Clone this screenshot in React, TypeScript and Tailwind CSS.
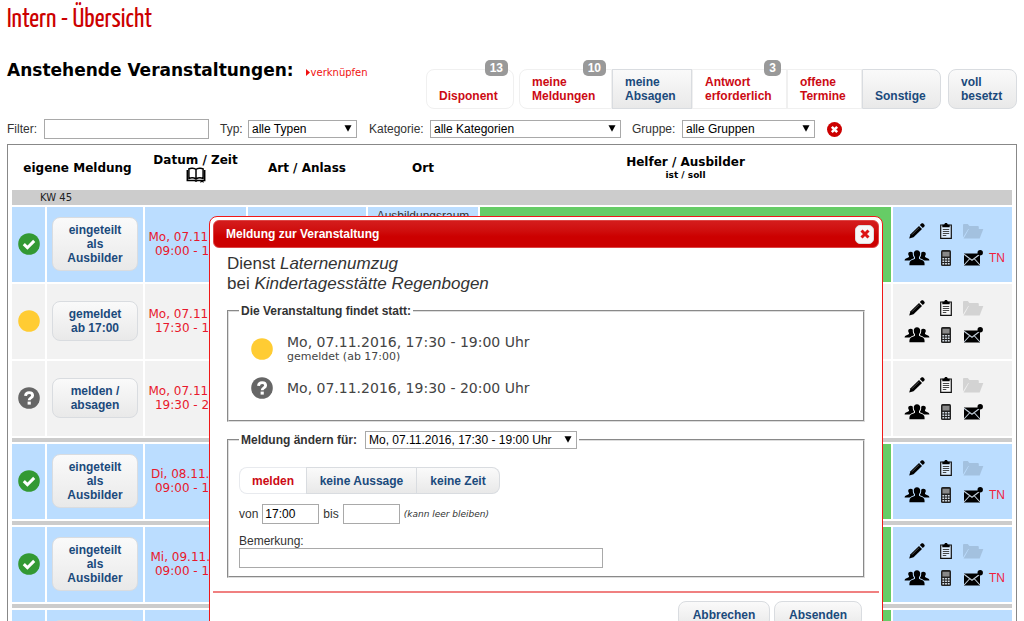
import { useState, type ReactNode } from 'react';
import clsx from 'clsx';

type Status = 'ok' | 'pending' | 'open';

interface EventRow {
  status: Status;
  label: string[];
  date: string;
  time: string;
  place?: string;
  staffed: boolean;
  divider?: boolean;
}

const EVENTS: EventRow[] = [
  { status: 'ok', label: ['eingeteilt', 'als', 'Ausbilder'], date: 'Mo, 07.11.2016', time: '09:00 - 17:00', place: 'Ausbildungsraum', staffed: true },
  { status: 'pending', label: ['gemeldet', 'ab 17:00'], date: 'Mo, 07.11.2016', time: '17:30 - 19:00', staffed: false },
  { status: 'open', label: ['melden /', 'absagen'], date: 'Mo, 07.11.2016', time: '19:30 - 20:00', staffed: false, divider: true },
  { status: 'ok', label: ['eingeteilt', 'als', 'Ausbilder'], date: 'Di, 08.11.2016', time: '09:00 - 17:00', staffed: true, divider: true },
  { status: 'ok', label: ['eingeteilt', 'als', 'Ausbilder'], date: 'Mi, 09.11.2016', time: '09:00 - 17:00', staffed: true, divider: true },
  { status: 'ok', label: ['eingeteilt', 'als', 'Ausbilder'], date: 'Do, 10.11.2016', time: '09:00 - 17:00', staffed: true },
];

const TABS = [
  { lines: ['meine', 'Meldungen'], badge: 10, active: true },
  { lines: ['meine', 'Absagen'], active: false },
  { lines: ['Antwort', 'erforderlich'], badge: 3, active: true },
  { lines: ['offene', 'Termine'], active: true },
  { lines: ['Sonstige'], active: false },
];

const TAB_WIDTHS = ['w-[93px] rounded-l-lg', 'w-[80px]', 'w-[95px]', 'w-[75px]', 'w-[79px] rounded-r-lg'];

const VERDANA = "font-['DejaVu_Sans',sans-serif]";
const ARIAL = "font-['Liberation_Sans',Arial,sans-serif]";
const BUTTON = 'border border-[#d9dce0] bg-linear-to-b from-[#fafafa] to-[#e9e9e9] font-bold text-[#1b4a7c]';

function StatusIcon({ status }: { status: Status }) {
  const fill = { ok: '#339933', pending: '#ffcc33', open: '#666666' }[status];
  return (
    <svg viewBox="0 0 22 22" className="mx-auto block h-[22px] w-[22px]" aria-hidden="true">
      <circle cx="11" cy="11" r="10.8" fill={fill} />
      {status === 'ok' && <path d="M5.8 11.2l3.6 3.5 6.8-6.8" fill="none" stroke="#fff" strokeWidth="3" />}
      {status === 'open' && (
        <>
          <path d="M7.5 8.9C7.7 6.7 9 5.6 11.1 5.6c2.1 0 3.5 1.1 3.5 2.9 0 2.5-3.4 2.3-3.4 4.7" fill="none" stroke="#fff" strokeWidth="2.9" />
          <path d="M9.6 14.6h3.2v3H9.6z" fill="#fff" />
        </>
      )}
    </svg>
  );
}

function CloseCircle() {
  return (
    <svg viewBox="0 0 14 14" className="block h-[15px] w-[15px]" aria-hidden="true">
      <circle cx="7" cy="7" r="7" fill="#cc0000" />
      <path d="M4.5 4.5l5 5m0-5l-5 5" stroke="#fff" strokeWidth="2.4" />
    </svg>
  );
}

function BookIcon() {
  return (
    <svg viewBox="0 0 20 16" className="mx-auto block h-4 w-5" fill="none" stroke="#000" strokeWidth="1.5" aria-hidden="true">
      <path d="M10 2.6C8.5.9 4.8.8 2.9 1.8v9.7c2.4-.9 5.1-.8 7.1.6 2-1.4 4.700-1.500 7.100-.6V1.8c-1.900-1-5.600-.9-7.100.8zM10 2.600v9.600" />
      <path d="M1.300 3v10.500h7.500l1.200.6 1.200-.6h7.500V3" />
      <path d="M14.500 13h3v3l-1.500-1.200-1.500 1.200z" fill="#000" stroke="none" />
    </svg>
  );
}

function PencilIcon() {
  return (
    <svg viewBox="0 0 18 18" className="h-[18px] w-[18px]" aria-hidden="true">
      <path d="M1.200 16.600l1.300-4.300L11 3.900l3 3-8.500 8.400z" />
      <path d="M11.800 3.100l1.600-1.500c.6-.6 1.300-.6 1.900 0l1.100 1.100c.5.6.5 1.200 0 1.800l-1.600 1.600z" />
      <path d="M4 12.700l7-7" stroke="#888" strokeWidth=".6" />
    </svg>
  );
}

function ClipboardIcon() {
  return (
    <svg viewBox="0 0 14 18" className="h-[18px] w-[14px]" aria-hidden="true">
      <path d="M1.700 3h10.600v13.300H1.700z" fill="#fff" fillOpacity=".5" stroke="#111" strokeWidth="1.200" />
      <path d="M3.300 5.200V2.800h1.900C5.300 1.500 6 1 7 1s1.700.5 1.800 1.800h1.900v2.400z" />
      <path d="M3.800 7.500h6.400M3.800 9.500h6.400M3.800 11.500h6.400M3.800 13.500h3.500" stroke="#333" strokeWidth=".9" />
    </svg>
  );
}

function FolderIcon() {
  return (
    <svg viewBox="0 0 22 18" className="h-[18px] w-[22px] opacity-[0.12]" aria-hidden="true">
      <path d="M1 15.500V3.200C1 2.300 1.400 2 2.200 2h3.600l1.600 1.900h8.200c.8 0 1.200.4 1.200 1.200v2H6.300z" />
      <path d="M6.900 7.100h14.400l-3.600 9.300H1.600z" />
    </svg>
  );
}

function UsersIcon() {
  return (
    <svg viewBox="0 0 26 18" className="h-[18px] w-[26px]" aria-hidden="true">
      <path d="M13 1.200c2 0 3.200 1.300 3.200 3.300 0 1.700-.5 2.800-1.200 3.600v1.700c1.800 1 4.500 1.600 5.200 3.100.4.8.4 2.300.4 3.400H5.400c0-1.100 0-2.600.4-3.400.7-1.500 3.400-2.100 5.200-3.100V8.100c-.7-.8-1.200-1.900-1.200-3.600 0-2 1.200-3.300 3.200-3.300z" />
      <path d="M6.700 2.800c1 0 1.700.3 2.100.9-.2 2 .3 3.700 1.200 4.900v.6c-1.500.8-3.300 1.300-4.400 2.400H.6c0-1.700.7-1.900 2.600-2.700l1.800-.8v-1.200C4.500 6.300 4.200 5.600 4.200 4.900c0-1.300 1-2.100 2.500-2.100z" />
      <path d="M19.300 2.800c-1 0-1.700.3-2.100.9.2 2-.3 3.700-1.200 4.900v.6c1.500.8 3.300 1.300 4.400 2.400h5c0-1.700-.7-1.900-2.600-2.700l-1.800-.8v-1.200c.5-.6.8-1.300.8-2 0-1.300-1-2.100-2.500-2.100z" />
    </svg>
  );
}

function PhoneIcon() {
  return (
    <svg viewBox="0 0 12 18" className="h-[18px] w-3" aria-hidden="true">
      <rect x="1" y="1" width="10" height="16" rx="1.5" fill="#222" />
      <path d="M2.500 2.800h7v4.700h-7z" fill="#888" />
      <path d="M2.400 9h1.800v1.500H2.400zM5.100 9h1.800v1.500H5.100zM7.800 9h1.800v1.500H7.800zM2.400 11.500h1.800V13H2.400zM5.100 11.500h1.800V13H5.100zM7.800 11.500h1.800V13H7.800zM2.400 14h1.800v1.500H2.400zM5.100 14h1.800v1.500H5.100zM7.800 14h1.800v1.500H7.800z" fill="#d4dde6" />
    </svg>
  );
}

function MailIcon() {
  return (
    <svg viewBox="0 0 22 18" className="h-[18px] w-[22px]" aria-hidden="true">
      <path d="M2 4.500h16v12H2z" />
      <path d="M2 5.200l8 6 7.500-5.700M2 16l5.500-6M18 16l-5.500-6" fill="none" stroke="#c4d0dc" strokeWidth="1.1" />
      <circle cx="18.2" cy="3.7" r="2.7" />
    </svg>
  );
}

function IconButton({ label, children }: { label: string; children: ReactNode }) {
  return (
    <button type="button" aria-label={label} className="flex h-[18px] items-center justify-center">
      {children}
    </button>
  );
}

function Select({ id, value, className }: { id: string; value: string; className: string }) {
  return (
    <span className={clsx('relative inline-block h-[18px]', className)}>
      <select id={id} className="block h-full w-full appearance-none border border-[#a9a9a9] bg-white pl-[3px] text-xs leading-4 text-black">
        <option>{value}</option>
      </select>
      <svg viewBox="0 0 8 7" className="pointer-events-none absolute top-[5px] right-[5px] h-[7px] w-2" aria-hidden="true">
        <path d="M.5.3h7L4 6.700z" />
      </svg>
    </span>
  );
}

function Badge({ count }: { count: number }) {
  return (
    <span className="absolute -top-[10px] right-[5px] flex h-4 items-center rounded-[5px] bg-[#999] px-[5px] text-xs leading-4 text-white">
      {count}
    </span>
  );
}

function Tab({ lines, badge, active, className }: { lines: string[]; badge?: number; active: boolean; className: string }) {
  return (
    <button
      type="button"
      className={clsx(
        'relative flex h-10 flex-col items-start justify-end border py-[5px] pl-3 text-left text-xs leading-[14px] font-bold',
        active ? 'border-[#f0f0f0] bg-white text-[#cc0a14]' : 'border-[#d9dce0] bg-linear-to-b from-[#fafafa] to-[#e9e9e9] text-[#1b4a7c]',
        className,
      )}
    >
      {lines.map((line) => (
        <span key={line}>{line}</span>
      ))}
      {badge && <Badge count={badge} />}
    </button>
  );
}

function EventTable() {
  return (
    <table className={clsx('mt-[5px] w-full table-fixed border-separate border-spacing-[2px] border border-[#888] p-[2px] text-xs', VERDANA)}>
      <colgroup>
        <col className="w-[33px]" />
        <col className="w-[96px]" />
        <col className="w-[101px]" />
        <col className="w-[118px]" />
        <col className="w-[110px]" />
        <col />
        <col className="w-[119px]" />
      </colgroup>
      <thead>
        <tr className="h-[39px] leading-[14px] text-black">
          <th colSpan={2} className="pb-[2px]">eigene Meldung</th>
          <th className="pb-[2px] whitespace-nowrap">
            Datum / Zeit
            <BookIcon />
          </th>
          <th className="pb-[2px]">Art / Anlass</th>
          <th className="pb-[2px]">Ort</th>
          <th className="pb-[2px]">
            Helfer / Ausbilder
            <span className="block text-[9px] leading-3">ist / soll</span>
          </th>
          <th />
        </tr>
      </thead>
      <tbody>
        <tr>
          <td colSpan={7} className="h-[15px] bg-[#ccc] pl-7 text-[10px] leading-[15px] text-[#222]">
            KW 45
          </td>
        </tr>
        {EVENTS.map((event) => (
          <EventRows key={event.date + event.time} event={event} />
        ))}
      </tbody>
    </table>
  );
}

function EventRows({ event }: { event: EventRow }) {
  const cell = event.staffed ? 'bg-[#bbddff]' : 'bg-[#f2f2f2]';
  return (
    <>
      <tr className="h-[75px] leading-[14px]">
        <td className={clsx(cell, 'pb-[2px]')}>
          <StatusIcon status={event.status} />
        </td>
        <td className={clsx(cell, 'px-[5px] pb-[2px]')}>
          <button type="button" className={clsx(BUTTON, ARIAL, 'block w-full rounded-lg py-[5px]')}>
            {event.label.map((line) => (
              <span key={line} className="block">
                {line}
              </span>
            ))}
          </button>
        </td>
        <td className={clsx(cell, 'pb-[2px] text-center whitespace-nowrap text-[#e8182c]')}>
          {event.date}
          <br />
          {event.time}
        </td>
        <td className={cell} />
        <td className={clsx(cell, ARIAL, 'pt-[2px] text-center align-top text-[#333]')}>{event.place}</td>
        <td className={event.staffed ? 'bg-[#66cc66]' : cell} />
        <td className={clsx(cell, 'pl-[11px]')}>
          <div className="grid grid-cols-[26px_22px_22px_20px] gap-x-[5px] gap-y-[9px]">
            <IconButton label="Bearbeiten"><PencilIcon /></IconButton>
            <IconButton label="Protokoll"><ClipboardIcon /></IconButton>
            <IconButton label="Dateien"><FolderIcon /></IconButton>
            <span />
            <IconButton label="Teilnehmer"><UsersIcon /></IconButton>
            <IconButton label="Telefonliste"><PhoneIcon /></IconButton>
            <IconButton label="Nachricht"><MailIcon /></IconButton>
            {event.staffed && <a href="#tn" className={clsx(ARIAL, 'leading-[18px] text-[#f0203c]')}>TN</a>}
          </div>
        </td>
      </tr>
      {event.divider && (
        <tr>
          <td colSpan={7} className="h-1 bg-[#ccc]" />
        </tr>
      )}
    </>
  );
}

function ReportDialog() {
  const [from, setFrom] = useState('17:00');
  const [until, setUntil] = useState('');
  const [note, setNote] = useState('');

  return (
    <div role="dialog" aria-labelledby="dialog-title" className="absolute top-[216px] left-[209px] w-[674px] rounded-lg border border-[#f01818] bg-white p-[3px] text-xs text-[#333]">
      <div className="flex h-7 items-center justify-between rounded-md border border-[#d44] bg-linear-to-b from-[#d41c1c] to-[#cc0000] to-60% pr-1 pl-3">
        <h2 id="dialog-title" className="font-bold text-white">Meldung zur Veranstaltung</h2>
        <button type="button" aria-label="Schließen" className="flex h-[19px] w-[19px] items-center justify-center rounded-[5px] border border-[#ddd] bg-[#f8f8f8]">
          <svg viewBox="0 0 10 10" className="h-[10px] w-[10px]" aria-hidden="true">
            <path d="M1.500 1.500l7 7m0-7l-7 7" stroke="#dd1515" strokeWidth="3" />
          </svg>
        </button>
      </div>

      <div className="px-[14px] pt-[6px] pb-[13px]">
        <p className="text-[17px] leading-5">
          Dienst <em>Laternenumzug</em>
          <br />
          bei <em>Kindertagesstätte Regenbogen</em>
        </p>

        <fieldset className="mt-[10px] h-[118px] border-2 border-[#ddd] px-[10px] [border-style:groove]">
          <legend className="px-[2px] leading-[14px] font-bold">Die Veranstaltung findet statt:</legend>
          <ul className={clsx('space-y-[13px] px-3 pt-4 text-sm text-[#444]', VERDANA)}>
            <li className="flex items-center gap-[14px]">
              <span><StatusIcon status="pending" /></span>
              <div className="leading-4">
                Mo, 07.11.2016, 17:30 - 19:00 Uhr
                <div className="text-[11px] leading-[14px]">gemeldet (ab 17:00)</div>
              </div>
            </li>
            <li className="flex items-center gap-[14px]">
              <span><StatusIcon status="open" /></span>
              Mo, 07.11.2016, 19:30 - 20:00 Uhr
            </li>
          </ul>
        </fieldset>

        <fieldset className="mt-[9px] h-[147px] border-2 border-[#ddd] px-[10px] [border-style:groove]">
          <legend className="flex items-center gap-2 px-[2px] leading-[14px] font-bold">
            <label htmlFor="slot">Meldung ändern für:</label>
            <Select id="slot" value="Mo, 07.11.2016, 17:30 - 19:00 Uhr" className="w-[212px] font-normal" />
          </legend>
          <div className="flex pt-[18px] leading-4">
            <button type="button" className="h-[27px] w-[67px] rounded-l-lg border border-r-0 border-[#e8eaee] font-bold text-[#cc0a14]">melden</button>
            <button type="button" className={clsx(BUTTON, 'h-[27px] w-[111px]')}>keine Aussage</button>
            <button type="button" className={clsx(BUTTON, 'h-[27px] w-[83px] rounded-r-lg border-l-0')}>keine Zeit</button>
          </div>
          <div className="mt-[10px] flex items-center gap-1">
            <label htmlFor="from">von</label>
            <input id="from" value={from} onChange={(e) => setFrom(e.target.value)} className="h-5 w-[57px] border border-[#a9a9a9] px-[2px] text-black" />
            <label htmlFor="until">bis</label>
            <input id="until" value={until} onChange={(e) => setUntil(e.target.value)} className="h-5 w-[57px] border border-[#a9a9a9] px-[2px] text-black" />
            <em className={clsx('text-[9px]', VERDANA)}>(kann leer bleiben)</em>
          </div>
          <label htmlFor="note" className="mt-[10px] block leading-[14px]">Bemerkung:</label>
          <input id="note" value={note} onChange={(e) => setNote(e.target.value)} className="block h-5 w-[364px] border border-[#a9a9a9] px-[2px] text-black" />
        </fieldset>
      </div>

      <div className="flex justify-end gap-1 border-t-2 border-[#f08080] pt-2 pr-[17px] pb-2">
        <button type="button" className={clsx(BUTTON, 'h-[27px] w-[92px] rounded-lg')}>Abbrechen</button>
        <button type="button" className={clsx(BUTTON, 'h-[27px] w-[88px] rounded-lg')}>Absenden</button>
      </div>
    </div>
  );
}

export default function App() {
  const [filter, setFilter] = useState('');

  return (
    <div className={clsx('relative h-screen overflow-hidden bg-white px-[7px] text-xs text-[#333]', ARIAL)}>
      <h1 className="h-[60px] pt-[6px] font-['Yanone_Kaffeesatz','Roboto_Condensed','Open_Sans_Condensed','Noto_Sans_Condensed','Roboto',sans-serif] text-[27px] leading-7 text-[#cc0000]">Intern - Übersicht</h1>

      <div className="flex justify-between">
        <div className={clsx('flex items-baseline gap-3', VERDANA)}>
          <h2 className="text-[17px] leading-5 font-bold text-black">Anstehende Veranstaltungen:</h2>
          <a href="#verknuepfen" className="flex items-center gap-px text-[10px] leading-3 text-[#f01010]">
            <svg viewBox="0 0 4 7" className="h-[7px] w-1" fill="#f01010" aria-hidden="true">
              <path d="M0 0l4 3.500L0 7z" />
            </svg>
            verknüpfen
          </a>
        </div>
        <nav className="mt-[9px] flex">
          <Tab lines={['Disponent']} badge={13} active className="mr-[5px] w-[88px] rounded-lg" />
          {TABS.map((tab, i) => (
            <Tab key={i} {...tab} className={TAB_WIDTHS[i]} />
          ))}
          <Tab lines={['voll', 'besetzt']} active={false} className="ml-[7px] w-[69px] rounded-lg" />
        </nav>
      </div>

      <form className="mt-[10px] flex h-5 items-center" onSubmit={(e) => e.preventDefault()}>
        <label htmlFor="filter" className="w-[37px]">Filter:</label>
        <input id="filter" value={filter} onChange={(e) => setFilter(e.target.value)} className="h-5 w-[165px] border border-[#a9a9a9] px-[2px]" />
        <label htmlFor="typ" className="ml-[11px] w-7">Typ:</label>
        <Select id="typ" value="alle Typen" className="w-[109px]" />
        <label htmlFor="kategorie" className="ml-3 w-[61px]">Kategorie:</label>
        <Select id="kategorie" value="alle Kategorien" className="w-[191px]" />
        <label htmlFor="gruppe" className="ml-[11px] w-[50px]">Gruppe:</label>
        <Select id="gruppe" value="alle Gruppen" className="w-[133px]" />
        <button type="button" aria-label="Filter löschen" className="ml-3">
          <CloseCircle />
        </button>
      </form>

      <EventTable />
      <ReportDialog />
    </div>
  );
}
